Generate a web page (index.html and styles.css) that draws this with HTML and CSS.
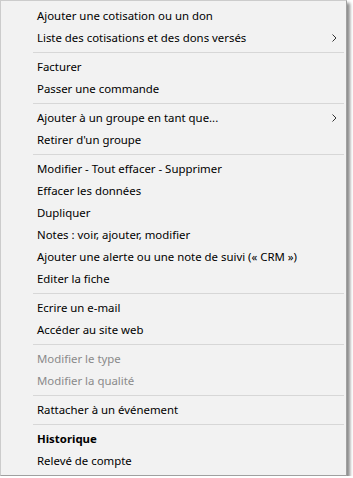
FILE: index.html
```html
<!DOCTYPE html>
<html lang="fr">
<head>
<meta charset="utf-8">
<link rel="stylesheet" href="styles.css">
</head>
<body>
<div class="menu">
  <div class="item">Ajouter une cotisation ou un don</div>
  <div class="item sub">Liste des cotisations et des dons versés<svg class="arrow" width="5" height="8" viewBox="0 0 5 8"><path d="M0.5 0.5 L4 4 L0.5 7.5" fill="none" stroke="#333" stroke-width="1"/></svg></div>
  <div class="sep"></div>
  <div class="item">Facturer</div>
  <div class="item">Passer une commande</div>
  <div class="sep"></div>
  <div class="item sub">Ajouter à un groupe en tant que...<svg class="arrow" width="5" height="8" viewBox="0 0 5 8"><path d="M0.5 0.5 L4 4 L0.5 7.5" fill="none" stroke="#333" stroke-width="1"/></svg></div>
  <div class="item">Retirer d'un groupe</div>
  <div class="sep"></div>
  <div class="item">Modifier - Tout effacer - Supprimer</div>
  <div class="item">Effacer les données</div>
  <div class="item">Dupliquer</div>
  <div class="item">Notes : voir, ajouter, modifier</div>
  <div class="item">Ajouter une alerte ou une note de suivi (« CRM »)</div>
  <div class="item">Editer la fiche</div>
  <div class="sep"></div>
  <div class="item">Ecrire un e-mail</div>
  <div class="item">Accéder au site web</div>
  <div class="sep"></div>
  <div class="item disabled">Modifier le type</div>
  <div class="item disabled">Modifier la qualité</div>
  <div class="sep"></div>
  <div class="item">Rattacher à un événement</div>
  <div class="sep"></div>
  <div class="item bold">Historique</div>
  <div class="item">Relevé de compte</div>
</div>
</body>
</html>
```

FILE: styles.css
```css
html, body {
  margin: 0;
  padding: 0;
  background: #ffffff;
}
.menu {
  width: 345px;
  box-sizing: content-box;
  background: #f2f2f2;
  border: 1px solid #cccccc;
  border-right-color: #a0a0a0;
  border-bottom-color: #a0a0a0;
  box-shadow: 3px 3px 3px rgba(0, 0, 0, 0.45);
  padding: 4px 0 3px 0;
  font-family: "Noto Sans", "Open Sans", sans-serif;
  font-size: 11.4px;
  color: #000;
}
.item {
  height: 22px;
  line-height: 22px;
  padding-left: 36px;
  padding-right: 9px;
  display: flex;
  align-items: center;
  justify-content: space-between;
  white-space: nowrap;
}
.item.disabled {
  color: #8a8a8a;
}
.item.bold {
  font-weight: bold;
}
.arrow {
  display: block;
}
.sep {
  height: 1px;
  background: #d7d7d7;
  margin: 3px 2px 3px 32px;
}
```
